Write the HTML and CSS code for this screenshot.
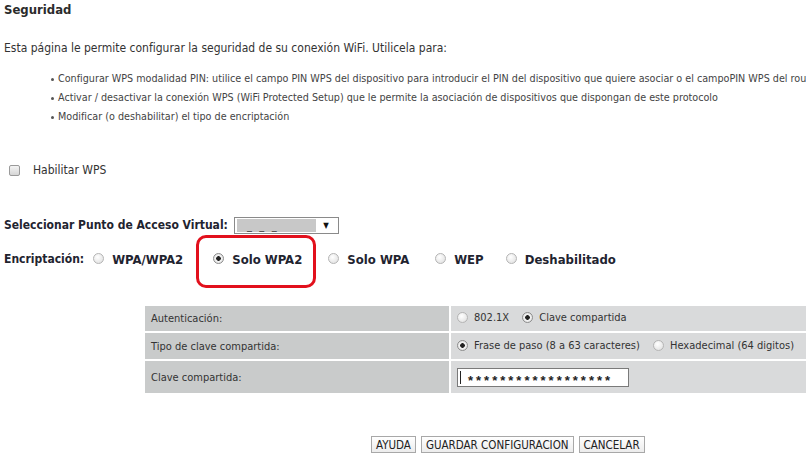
FILE: index.html
```html
<!DOCTYPE html>
<html lang="es">
  <head>
    <meta charset="UTF-8" />
    <meta name="viewport" content="width=device-width, initial-scale=1.0" />
    <title>Seguridad</title>
    <link rel="stylesheet" href="styles.css">
  </head>
  <body>
    <div class="page">
      <h2 class="title">Seguridad</h2>
      <p class="intro">Esta página le permite configurar la seguridad de su conexión WiFi. Utilicela para:</p>
      <ul class="tips">
        <li>Configurar WPS modalidad PIN: utilice el campo PIN WPS del dispositivo para introducir el PIN del dispositivo que quiere asociar o el campoPIN WPS del route</li>
        <li>Activar / desactivar la conexión WPS (WiFi Protected Setup) que le permite la asociación de dispositivos que dispongan de este protocolo</li>
        <li>Modificar (o deshabilitar) el tipo de encriptación</li>
      </ul>

      <label class="wps">
        <input type="checkbox" class="check" />
        <span>Habilitar WPS</span>
      </label>

      <div class="field-row ap-row">
        <span class="field-label">Seleccionar Punto de Acceso Virtual:</span>
        <div class="fake-select">
          <span class="fake-value">_ _ _</span>
          <span class="fake-arrow">▼</span>
        </div>
      </div>

      <div class="field-row enc-row">
        <span class="field-label">Encriptación:</span>
        <label class="enc-option"><input type="radio" name="enc" class="radio" /><span>WPA/WPA2</span></label>
        <label class="enc-option marked"><input type="radio" name="enc" class="radio" checked /><span>Solo WPA2</span></label>
        <label class="enc-option"><input type="radio" name="enc" class="radio" /><span>Solo WPA</span></label>
        <label class="enc-option narrow"><input type="radio" name="enc" class="radio" /><span>WEP</span></label>
        <label class="enc-option"><input type="radio" name="enc" class="radio" /><span>Deshabilitado</span></label>
      </div>

      <table class="settings">
        <colgroup>
          <col class="col-label" />
          <col />
        </colgroup>
        <tr class="row-auth">
          <td class="cell-label">Autenticación:</td>
          <td class="cell-value">
            <label class="opt"><input type="radio" name="auth" class="radio" /><span>802.1X</span></label>
            <label class="opt"><input type="radio" name="auth" class="radio" checked /><span>Clave compartida</span></label>
          </td>
        </tr>
        <tr class="row-type">
          <td class="cell-label">Tipo de clave compartida:</td>
          <td class="cell-value">
            <label class="opt"><input type="radio" name="ktype" class="radio" checked /><span>Frase de paso (8 a 63 caracteres)</span></label>
            <label class="opt"><input type="radio" name="ktype" class="radio" /><span>Hexadecimal (64 digitos)</span></label>
          </td>
        </tr>
        <tr class="row-key">
          <td class="cell-label">Clave compartida:</td>
          <td class="cell-value">
            <div class="key-box"><span class="caret"></span><span class="stars">******************</span></div>
          </td>
        </tr>
      </table>

      <div class="actions">
        <button class="btn">AYUDA</button>
        <button class="btn">GUARDAR CONFIGURACION</button>
        <button class="btn">CANCELAR</button>
      </div>
    </div>
  </body>
</html>
```

FILE: styles.css
```css
* {
  box-sizing: border-box;
}

body {
  margin: 0;
  background: #fff;
  font-family: "DejaVu Sans Condensed", "DejaVu Sans", sans-serif;
  font-size: 12px;
  color: #333;
  overflow: hidden;
}

.page {
  padding: 2px 0 0 4px;
  width: 806px;
}

.title {
  margin: 0;
  font-size: 13px;
  font-weight: bold;
  color: #2b2b2b;
  line-height: 16px;
}

.intro {
  margin: 22px 0 0;
  line-height: 16px;
  color: #333;
}

.tips {
  margin: 13px 0 0;
  padding-left: 54px;
  font-size: 10.7px;
  line-height: 19px;
  color: #444;
  white-space: nowrap;
}

.tips li {
  list-style: none;
  position: relative;
}

.tips li::before {
  content: "";
  position: absolute;
  left: -7px;
  top: 9px;
  width: 3px;
  height: 3px;
  border-radius: 50%;
  background: #555;
}

.wps {
  display: flex;
  align-items: center;
  margin: 36px 0 0 5px;
  height: 16px;
  color: #333;
}

.check {
  appearance: none;
  margin: 0 13px 0 0;
  width: 11px;
  height: 11px;
  border: 1px solid #9a9a9a;
  border-radius: 2px;
  background: linear-gradient(#f4f4f4, #d6d6d6);
}

.field-row {
  display: flex;
  align-items: center;
  font-weight: bold;
  font-size: 12px;
  color: #1f2430;
}

.ap-row {
  margin-top: 38px;
  height: 18px;
}

.field-label {
  margin-right: 6px;
}

.fake-select {
  display: flex;
  align-items: center;
  width: 105px;
  height: 17px;
  border: 1px solid #8a8a8a;
  background: #fff;
  padding: 1px 2px;
}

.fake-value {
  flex: 1;
  height: 13px;
  background: #c8c8c8;
  color: #555;
  font-size: 11px;
  line-height: 13px;
  padding-left: 10px;
  letter-spacing: 2px;
}

.fake-arrow {
  width: 20px;
  text-align: center;
  font-size: 8px;
  color: #111;
}

.enc-row {
  margin-top: 16px;
  height: 18px;
}

.enc-row .field-label {
  margin-right: 9px;
}

.enc-option {
  display: flex;
  align-items: center;
  margin-right: 26px;
  font-size: 13px;
}

.enc-option:first-of-type {
  margin-right: 30px;
}

.enc-option.narrow {
  margin-right: 22px;
}

.enc-option .radio {
  margin: 0 8px 2px 0;
}

.marked {
  position: relative;
}

.marked::after {
  content: "";
  position: absolute;
  left: -17px;
  right: -14px;
  top: 50%;
  height: 47px;
  margin-top: -24px;
  border: 3px solid #e2101c;
  border-radius: 10px;
}

.radio {
  appearance: none;
  width: 11px;
  height: 11px;
  margin: 0;
  border: 1px solid #b4b4b4;
  border-radius: 50%;
  background: radial-gradient(circle at 40% 35%, #ffffff, #dcdcdc);
  flex: none;
}

.radio:checked {
  background: radial-gradient(circle, #222 0 2px, #f4f4f4 2.6px, #d8d8d8);
  border-color: #8c8c8c;
}

.settings {
  margin: 38px 0 0 139px;
  width: 665px;
  table-layout: fixed;
  border-collapse: collapse;
  font-weight: normal;
  font-size: 11px;
  color: #333;
  white-space: nowrap;
}

.col-label {
  width: 306px;
}

.settings td {
  border: 2px solid #fff;
  padding: 0 6px;
}

.settings tr:first-child td {
  border-top: 0;
}

.row-auth td {
  height: 26px;
}

.row-type td {
  height: 28px;
}

.row-key td {
  height: 34px;
}

.cell-label {
  background: #c9cbcb;
  padding-left: 5px;
}

.cell-value {
  background: #d9dadb;
  padding-left: 6px;
}

.opt {
  display: inline-flex;
  align-items: center;
  margin-right: 10px;
}

.opt .radio {
  margin-right: 6px;
}

.key-box {
  display: flex;
  align-items: center;
  width: 172px;
  height: 19px;
  border: 1px solid #7a7a7a;
  background: #fff;
  padding-left: 2px;
}

.caret {
  width: 1px;
  height: 13px;
  background: #222;
  margin-right: 7px;
}

.stars {
  font-family: "Liberation Sans", sans-serif;
  font-weight: bold;
  font-size: 13px;
  letter-spacing: 3px;
  color: #222;
  position: relative;
  top: 3px;
}

.actions {
  display: flex;
  gap: 5px;
  margin: 41px 0 0 367px;
}

.btn {
  font-family: inherit;
  font-size: 11.5px;
  color: #222;
  height: 17px;
  padding: 0 4px;
  border: 1px solid #a8a8a8;
  background: linear-gradient(#ffffff, #ececec);
  line-height: 14px;
}
```
